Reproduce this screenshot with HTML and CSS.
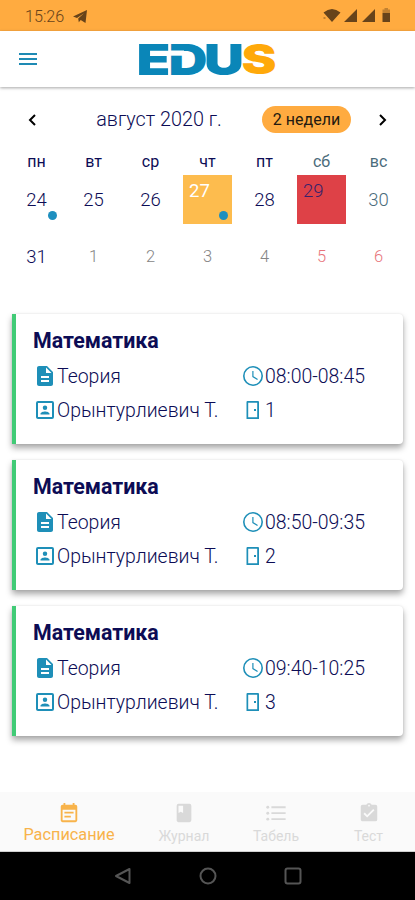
FILE: index.html
```html
<!DOCTYPE html>
<html lang="ru">
<head>
<meta charset="utf-8">
<title>EDUS</title>
<link rel="stylesheet" href="styles.css">
</head>
<body>
<svg class="defs" aria-hidden="true">
  <symbol id="doc" viewBox="0 0 24 24"><path d="M14 2H6c-1.100 0-2 .9-2 2v16c0 1.100.9 2 2 2h12c1.100 0 2-.9 2-2V8zm2 16H8v-2h8zm0-4H8v-2h8zm-3-5V3.500L18.500 9z"/></symbol>
  <symbol id="person" viewBox="0 0 24 24"><path d="M19 3H5a2 2 0 0 0-2 2v14c0 1.100.9 2 2 2h14a2 2 0 0 0 2-2V5a2 2 0 0 0-2-2zm0 16H5V5h14zM12 12a2.250 2.250 0 1 0 0-4.500 2.250 2.250 0 0 0 0 4.500zm4.500 4.500v-.75c0-1.500-3-2.250-4.500-2.250s-4.500.75-4.500 2.250v.75z"/></symbol>
  <symbol id="clock" viewBox="0 0 24 24"><path d="M12 2a10 10 0 1 0 0 20 10 10 0 0 0 0-20zm0 18.400a8.400 8.400 0 1 1 0-16.800 8.400 8.400 0 0 1 0 16.800zM12.500 7H11.300v6l4.900 3 .7-1.100-4.400-2.600z"/></symbol>
  <symbol id="door" viewBox="0 0 24 24"><path d="M17 3H6.500a1 1 0 0 0-1 1v17H18V4a1 1 0 0 0-1-1zm-.8 16.300h-9V4.700h9zM13 10.900h2v2.200h-2z"/></symbol>
</svg>

<header class="status">
  <span class="time">15:26</span>
  <svg class="plane" viewBox="0 0 14 13"><path d="M0 6.500 14 0l-1.500 13-4.800-3-1.900 2.200-.6-3.600L11 3.300 4 8z"/></svg>
  <svg class="signals" viewBox="0 0 70 16">
    <path d="M2.500 4.500Q11-2.500 19.500 4.500L11 14zM23 14 36 1v13zM41 14 54 1v13zM61.500 5h7.500v9h-7.500z"/>
    <path class="faint" d="M61.500 1.500h2V0h3.500v1.500h2V5h-7.500zM2.500 9h2v2h-2z"/>
  </svg>
</header>

<div class="appbar">
  <svg class="menu" viewBox="0 0 18 12"><path d="M0 0h18v2H0zM0 5h18v2H0zM0 10h18v2H0z"/></svg>
  <svg class="logo" viewBox="0 0 138 32" role="img">
    <g class="blue">
      <text x="-1.500" y="31.500" textLength="34" lengthAdjust="spacingAndGlyphs">E</text>
      <text x="30.500" y="31.500" textLength="39" lengthAdjust="spacingAndGlyphs">D</text>
      <text x="66" y="31.500" textLength="40" lengthAdjust="spacingAndGlyphs">U</text>
    </g>
    <path class="cut" d="M31.500 7.500H46v5.200H31.500z"/>
    <text class="yellow" x="103.500" y="31" textLength="35" lengthAdjust="spacingAndGlyphs">S</text>
  </svg>
</div>

<main>
  <section class="calendar">
    <div class="calhead">
      <svg class="chev" viewBox="0 0 8 12"><path d="M7 1 2 6l5 5"/></svg>
      <h1>август 2020 г.</h1>
      <button>2 недели</button>
      <svg class="chev" viewBox="0 0 8 12"><path d="m1 1 5 5-5 5"/></svg>
    </div>
    <div class="week names">
      <span>пн</span><span>вт</span><span>ср</span><span>чт</span><span>пт</span><span class="off">сб</span><span class="off">вс</span>
    </div>
    <div class="week days">
      <span class="dot">24</span><span>25</span><span>26</span><span class="tile today dot">27</span><span>28</span><span class="tile picked">29</span><span class="off">30</span>
    </div>
    <div class="week days">
      <span>31</span><span class="next">1</span><span class="next">2</span><span class="next">3</span><span class="next">4</span><span class="next red">5</span><span class="next red">6</span>
    </div>
  </section>

  <section class="lessons">
    <article>
      <h2>Математика</h2>
      <div class="info">
        <p><svg><use href="#doc"/></svg><span>Теория</span></p>
        <p><svg><use href="#clock"/></svg><span>08:00-08:45</span></p>
        <p><svg><use href="#person"/></svg><span>Орынтурлиевич Т.</span></p>
        <p><svg><use href="#door"/></svg><span>1</span></p>
      </div>
    </article>
    <article>
      <h2>Математика</h2>
      <div class="info">
        <p><svg><use href="#doc"/></svg><span>Теория</span></p>
        <p><svg><use href="#clock"/></svg><span>08:50-09:35</span></p>
        <p><svg><use href="#person"/></svg><span>Орынтурлиевич Т.</span></p>
        <p><svg><use href="#door"/></svg><span>2</span></p>
      </div>
    </article>
    <article>
      <h2>Математика</h2>
      <div class="info">
        <p><svg><use href="#doc"/></svg><span>Теория</span></p>
        <p><svg><use href="#clock"/></svg><span>09:40-10:25</span></p>
        <p><svg><use href="#person"/></svg><span>Орынтурлиевич Т.</span></p>
        <p><svg><use href="#door"/></svg><span>3</span></p>
      </div>
    </article>
  </section>
</main>

<nav class="tabs">
  <a class="active"><svg viewBox="0 0 24 24"><path d="M19 3h-1V1h-2v2H8V1H6v2H5a2 2 0 0 0-2 2v15c0 1.100.9 2 2 2h14a2 2 0 0 0 2-2V5a2 2 0 0 0-2-2zm0 17H5V8.500h14zM7 10.500h10v2H7zM7 15h7v2H7z"/></svg><span>Расписание</span></a>
  <a><svg viewBox="0 0 24 24"><path d="M18 2H6a2 2 0 0 0-2 2v16c0 1.100.9 2 2 2h12a2 2 0 0 0 2-2V4a2 2 0 0 0-2-2zM6 4h5v8l-2.500-1.500L6 12z"/></svg><span>Журнал</span></a>
  <a><svg viewBox="0 0 24 24"><path d="M7 4.700h15.500v2H7zM7 11.200h15.500v2H7zM7 17.700h15.500v2H7z"/><circle cx="3" cy="5.700" r="1.600"/><circle cx="3" cy="12.200" r="1.600"/><circle cx="3" cy="18.700" r="1.600"/></svg><span>Табель</span></a>
  <a><svg viewBox="0 0 24 24"><path d="M19 3h-4.180C14.400 1.840 13.300 1 12 1s-2.400.84-2.820 2H5a2 2 0 0 0-2 2v14c0 1.100.9 2 2 2h14a2 2 0 0 0 2-2V5a2 2 0 0 0-2-2zm-7 0a1 1 0 1 1 0 2 1 1 0 0 1 0-2zm-2 14-4-4 1.410-1.410L10 14.170l6.590-6.590L18 9z"/></svg><span>Тест</span></a>
</nav>

<footer class="system">
  <svg viewBox="0 0 18 18"><path d="M15.500 2v14L2 9z"/></svg>
  <svg viewBox="0 0 18 18"><circle cx="9" cy="9" r="7.500"/></svg>
  <svg viewBox="0 0 18 18"><rect x="1.500" y="1.500" width="15" height="15" rx="2"/></svg>
</footer>
</body>
</html>
```

FILE: styles.css
```css
* { box-sizing: border-box; margin: 0; }
body {
  width: 415px; height: 900px; overflow: hidden;
  display: flex; flex-direction: column;
  font-family: Roboto, "Liberation Sans", sans-serif;
  color: #0c0c55; background: #fff;
}
.defs { display: none; }
.status {
  height: 31px; flex: none; display: flex; align-items: center;
  padding: 1px 24px 0 25px; background: #ffab40; color: #67431a; fill: #67431a;
}
.time { font-size: 16.200px; font-weight: 350; width: 48px; }
.plane { width: 14px; height: 13px; }
.signals { width: 70px; height: 16px; margin-left: auto; }
.faint { opacity: .4; }
.appbar {
  height: 56px; flex: none; display: flex; align-items: center;
  padding-left: 19px; background: #fff; box-shadow: 0 1px 3px rgba(0,0,0,.35);
}
.menu { width: 18px; height: 12px; fill: #1e8ab4; }
.logo { width: 138px; height: 32px; margin-left: 101px; overflow: visible; }
.logo text { font: 900 42px Inter, sans-serif; }
.logo .yellow { font-size: 41px; }
.blue { fill: #0a86b8; }
.yellow { fill: #ffa90a; }
.cut { fill: #fff; }
main { flex: 1; }
.calendar { padding: 18px 7px 0 8px; }
.calhead { display: flex; align-items: center; height: 29px; padding: 0 21px 0 20px; }
.chev { width: 8px; height: 12px; fill: none; stroke: #000; stroke-width: 2; flex: none; }
h1 { flex: 1; padding-left: 20px; font-size: 19.800px; font-weight: 300; text-align: center; white-space: nowrap; }
button {
  width: 89px; height: 27px; margin-right: 28px; padding: 0; border: 0; border-radius: 14px;
  background: #ffab40; color: #241a10; font: 400 16px Roboto, sans-serif; flex: none;
}
.week { display: grid; grid-template-columns: repeat(7, 57px); justify-items: center; align-items: center; }
.names { height: 37px; padding-top: 18px; font-size: 16px; align-items: start; line-height: 20px; }
.days { height: 57px; font-size: 18.500px; font-weight: 300; }
.days span {
  position: relative; width: 49px; height: 49px;
  display: flex; align-items: center; justify-content: center;
}
.off { color: #4b6c7b; }
.days .next { font-size: 16.500px; color: #858585; }
.days .red { color: #e8737a; }
.days .tile { align-items: flex-start; justify-content: flex-start; padding: 5px 6px; }
.days .today { background: #fdbc4e; color: #fff; font-weight: 400; }
.picked { background: #de4147; color: #38216b; }
.dot::after {
  content: ""; position: absolute; right: 4px; bottom: 4px;
  width: 9px; height: 9px; border-radius: 50%; background: #1e8fbf;
}
.lessons { display: grid; gap: 16px; padding: 29px 12px 0; }
article {
  height: 130px; padding: 13px 0 0 17px; background: #fff;
  border-left: 4px solid #41cb76; border-radius: 0 4px 4px 0;
  box-shadow: 0 4px 6px rgba(0,0,0,.35), 0 0 2px rgba(0,0,0,.1);
}
h2 { font-size: 21.400px; line-height: 28px; font-weight: 700; }
.info { display: grid; grid-template-columns: 208px 1fr; grid-auto-rows: 34px; padding-top: 4px; }
.info p { display: flex; align-items: center; font-size: 19.450px; font-weight: 300; white-space: nowrap; }
.info svg { width: 24px; height: 24px; fill: #1e8fb8; flex: none; }
.tabs {
  height: 60px; flex: none; display: grid; grid-template-columns: 138px 92px 92px 93px;
  background: #fafafa; border-bottom: 1px solid #d0d0d0; color: #d9d9d9; fill: #d9d9d9;
}
.tabs a { display: flex; flex-direction: column; align-items: center; padding-top: 10px; font-size: 14px; }
.tabs svg { width: 22px; height: 22px; }
.tabs span { padding-top: 4px; }
.tabs .active { color: #f8b34a; fill: #f8b34a; font-size: 16.300px; }
.tabs .active span { padding-top: 1px; }
.system {
  height: 48px; flex: none; display: flex; align-items: center; gap: 67px;
  padding-left: 114px; background: #000;
}
.system svg { width: 18px; height: 18px; fill: none; stroke: #555; stroke-width: 2; stroke-linejoin: round; }
```
